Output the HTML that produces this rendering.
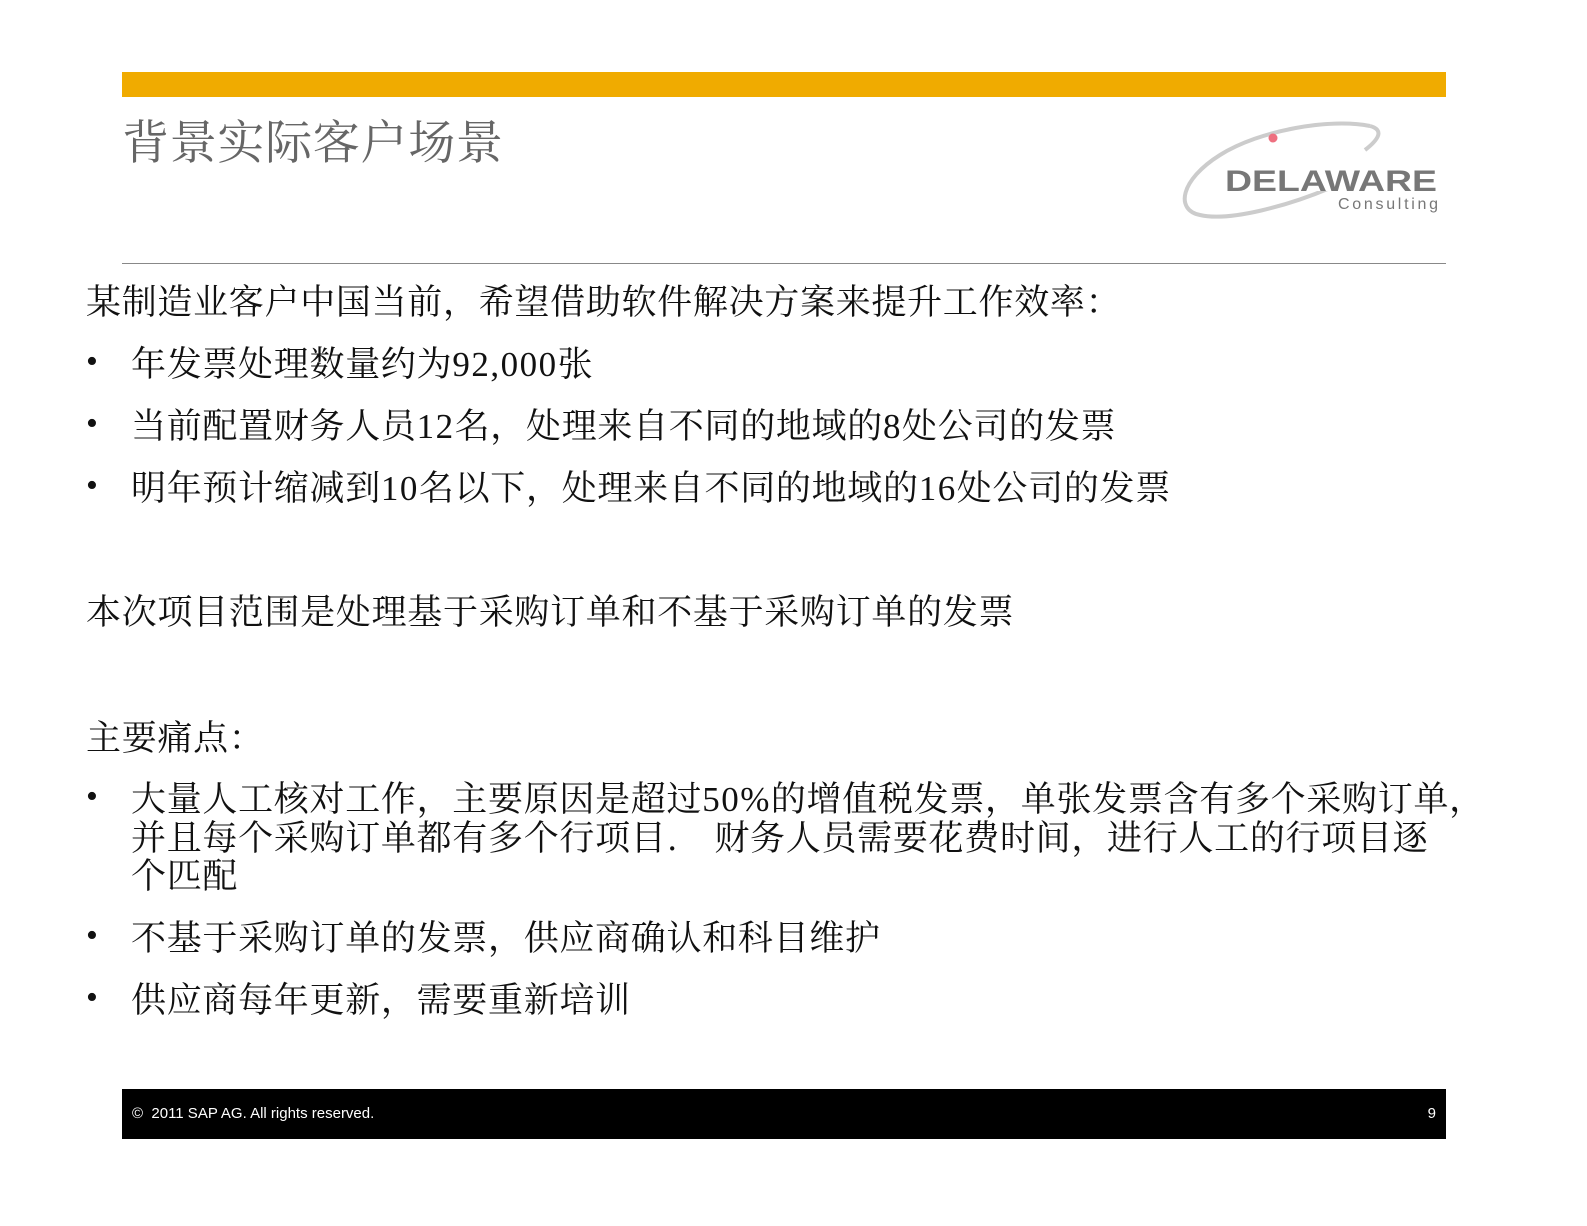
<!DOCTYPE html>
<html><head><meta charset="utf-8"><style>
body{margin:0;width:1587px;height:1226px;background:#fff;position:relative;overflow:hidden;font-family:"Noto Serif CJK SC","Liberation Serif",serif;color:#111}
.a{position:absolute;white-space:nowrap;font-size:35px;line-height:40px;letter-spacing:0.7px}
.b{position:absolute;left:86px;font-size:34px;line-height:40px;font-family:"Liberation Serif",serif}
.m{font-family:"Liberation Serif",serif;letter-spacing:1.5px}
</style></head><body>
<div style="position:absolute;left:122px;top:72px;width:1324px;height:25px;background:#f0ab00"></div>
<div class="a" style="left:122px;top:110px;font-size:47px;line-height:60px;color:#666">背景实际客户场景</div>
<svg style="position:absolute;left:1170px;top:110px" width="290" height="120">
<path d="M200 16 C160 8 90 20 50 45 C10 70 5 100 30 105 C60 112 120 95 160 78" fill="none" stroke="#ccc" stroke-width="4"/>
<path d="M200 16 C215 20 208 30 195 40" fill="none" stroke="#ccc" stroke-width="4"/>
<circle cx="103" cy="28" r="4.5" fill="#ee7080"/>
<rect x="52" y="56" width="225" height="25" fill="#fff"/>
<text x="55" y="81" font-family="Liberation Sans" font-weight="bold" font-size="30" fill="#777" textLength="212" lengthAdjust="spacingAndGlyphs">DELAWARE</text>
<text x="168" y="99" font-family="Liberation Sans" font-size="16" fill="#777" textLength="100">Consulting</text>
</svg>
<div style="position:absolute;left:122px;top:263px;width:1324px;height:1px;background:#888"></div>
<div class="a" style="left:86px;top:280px">某制造业客户中国当前，希望借助软件解决方案来提升工作效率：</div>
<div class="b" style="top:342px">•</div><div class="a" style="left:131px;top:342px">年发票处理数量约为<span class="m">92,000</span>张</div>
<div class="b" style="top:404px">•</div><div class="a" style="left:131px;top:404px">当前配置财务人员<span class="m">12</span>名，处理来自不同的地域的<span class="m">8</span>处公司的发票</div>
<div class="b" style="top:466px">•</div><div class="a" style="left:131px;top:466px">明年预计缩减到<span class="m">10</span>名以下，处理来自不同的地域的<span class="m">16</span>处公司的发票</div>
<div class="a" style="left:86px;top:590px">本次项目范围是处理基于采购订单和不基于采购订单的发票</div>
<div class="a" style="left:86px;top:716px">主要痛点：</div>
<div class="b" style="top:777px">•</div>
<div class="a" style="left:131px;top:777px">大量人工核对工作，主要原因是超过<span class="m">50%</span>的增值税发票，单张发票含有多个采购订单，</div>
<div class="a" style="left:131px;top:816px">并且每个采购订单都有多个行项目.　财务人员需要花费时间，进行人工的行项目逐</div>
<div class="a" style="left:131px;top:854px">个匹配</div>
<div class="b" style="top:916px">•</div><div class="a" style="left:131px;top:916px">不基于采购订单的发票，供应商确认和科目维护</div>
<div class="b" style="top:978px">•</div><div class="a" style="left:131px;top:978px">供应商每年更新，需要重新培训</div>
<div style="position:absolute;left:122px;top:1089px;width:1324px;height:50px;background:#000;color:#fff;font-family:'Liberation Sans',sans-serif;font-size:15px;line-height:50px">
<span style="position:absolute;left:10px">©&nbsp; 2011 SAP AG. All rights reserved.</span>
<span style="position:absolute;right:10px">9</span></div>
</body></html>
